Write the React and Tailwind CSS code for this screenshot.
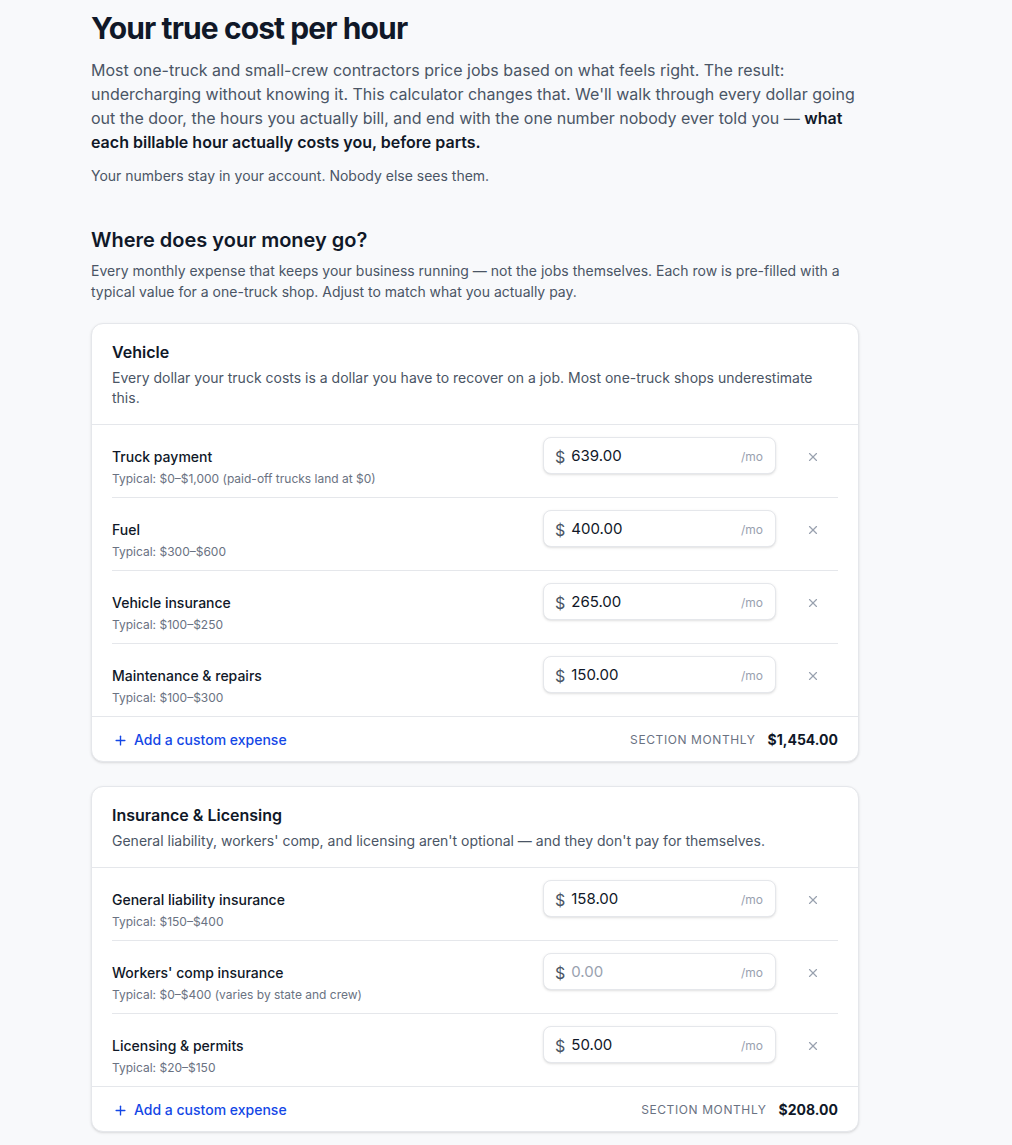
import React from "react";

const sections = [
  {
    title: "Vehicle",
    desc: "Every dollar your truck costs is a dollar you have to recover on a job. Most one-truck shops underestimate this.",
    rows: [
      { label: "Truck payment", typical: "Typical: $0–$1,000 (paid-off trucks land at $0)", value: "639.00" },
      { label: "Fuel", typical: "Typical: $300–$600", value: "400.00" },
      { label: "Vehicle insurance", typical: "Typical: $100–$250", value: "265.00" },
      { label: "Maintenance & repairs", typical: "Typical: $100–$300", value: "150.00" },
    ],
    total: "$1,454.00",
  },
  {
    title: "Insurance & Licensing",
    desc: "General liability, workers' comp, and licensing aren't optional — and they don't pay for themselves.",
    rows: [
      { label: "General liability insurance", typical: "Typical: $150–$400", value: "158.00" },
      { label: "Workers' comp insurance", typical: "Typical: $0–$400 (varies by state and crew)", value: "" },
      { label: "Licensing & permits", typical: "Typical: $20–$150", value: "50.00" },
    ],
    total: "$208.00",
  },
];

function XIcon() {
  return (
    <svg width="14" height="14" viewBox="0 0 24 24" fill="none" stroke="currentColor" strokeWidth="2" strokeLinecap="round" strokeLinejoin="round">
      <path d="M18 6 6 18" />
      <path d="m6 6 12 12" />
    </svg>
  );
}

function PlusIcon() {
  return (
    <svg width="15" height="15" viewBox="0 0 24 24" fill="none" stroke="currentColor" strokeWidth="2.2" strokeLinecap="round" strokeLinejoin="round">
      <path d="M5 12h14" />
      <path d="M12 5v14" />
    </svg>
  );
}

function Row({ row }) {
  return (
    <div className="flex items-start pt-3 pb-[10px] border-b border-gray-200 last:border-b-0">
      <div className="flex-1 pt-[10px]">
        <div className="text-sm leading-5 font-medium text-gray-900">{row.label}</div>
        <div className="mt-1 text-xs leading-4 text-gray-500">{row.typical}</div>
      </div>
      <div className="w-[233px] h-[37px] flex items-center rounded-lg border border-gray-200 bg-white shadow-sm pl-[11px] pr-3 pt-[2px]">
        <span className="text-base text-gray-600">$</span>
        <span className={"ml-[6px] flex-1 text-[15px] " + (row.value ? "text-gray-900" : "text-gray-400")}>
          {row.value || "0.00"}
        </span>
        <span className="text-xs text-gray-400">/mo</span>
      </div>
      <div className="ml-3 w-[50px] h-[37px] pt-[2px] flex items-center justify-center text-gray-400">
        <XIcon />
      </div>
    </div>
  );
}

function Card({ s }) {
  return (
    <div className="rounded-xl border border-gray-200 bg-white shadow-sm">
      <div className="px-5 py-4 border-b border-gray-200">
        <div className="text-base leading-6 font-semibold text-gray-900">{s.title}</div>
        <div className="mt-1 text-sm leading-5 text-gray-600">{s.desc}</div>
      </div>
      <div className="px-5">
        {s.rows.map((r) => (
          <Row key={r.label} row={r} />
        ))}
      </div>
      <div className="flex items-center justify-between px-5 pt-[13px] pb-[11px] border-t border-gray-200">
        <div className="flex items-center gap-[6px] text-sm leading-5 font-medium text-blue-700">
          <span className="ml-[1px]"><PlusIcon /></span>
          <span>Add a custom expense</span>
        </div>
        <div className="flex items-center gap-3">
          <span className="text-xs uppercase tracking-wider text-gray-500">Section monthly</span>
          <span className="text-sm font-bold text-gray-900">{s.total}</span>
        </div>
      </div>
    </div>
  );
}

export default function App() {
  return (
    <div className="min-h-screen bg-[#f8f9fb] font-['Inter',sans-serif] text-gray-900">
      <div className="pl-[91px] pt-[10px] pb-4">
        <div className="w-[768px]">
          <h1 className="text-3xl leading-9 font-bold tracking-[-0.03em] text-gray-900">Your true cost per hour</h1>
          <p className="mt-3 text-base leading-6 text-gray-600">
            Most one-truck and small-crew contractors price jobs based on what feels right. The result: undercharging without knowing it. This calculator changes that. We'll walk through every dollar going out the door, the hours you actually bill, and end with the one number nobody ever told you —{" "}
            <strong className="font-semibold text-gray-900">what each billable hour actually costs you, before parts.</strong>
          </p>
          <p className="mt-3 text-sm leading-5 text-gray-600">Your numbers stay in your account. Nobody else sees them.</p>

          <h2 className="mt-10 text-xl leading-7 font-semibold text-gray-900">Where does your money go?</h2>
          <p className="mt-[6px] text-sm leading-[21px] text-gray-600">
            Every monthly expense that keeps your business running — not the jobs themselves. Each row is pre-filled with a typical value for a one-truck shop. Adjust to match what you actually pay.
          </p>

          <div className="mt-[21px] flex flex-col gap-6">
            {sections.map((s) => (
              <Card key={s.title} s={s} />
            ))}
          </div>
        </div>
      </div>
    </div>
  );
}
